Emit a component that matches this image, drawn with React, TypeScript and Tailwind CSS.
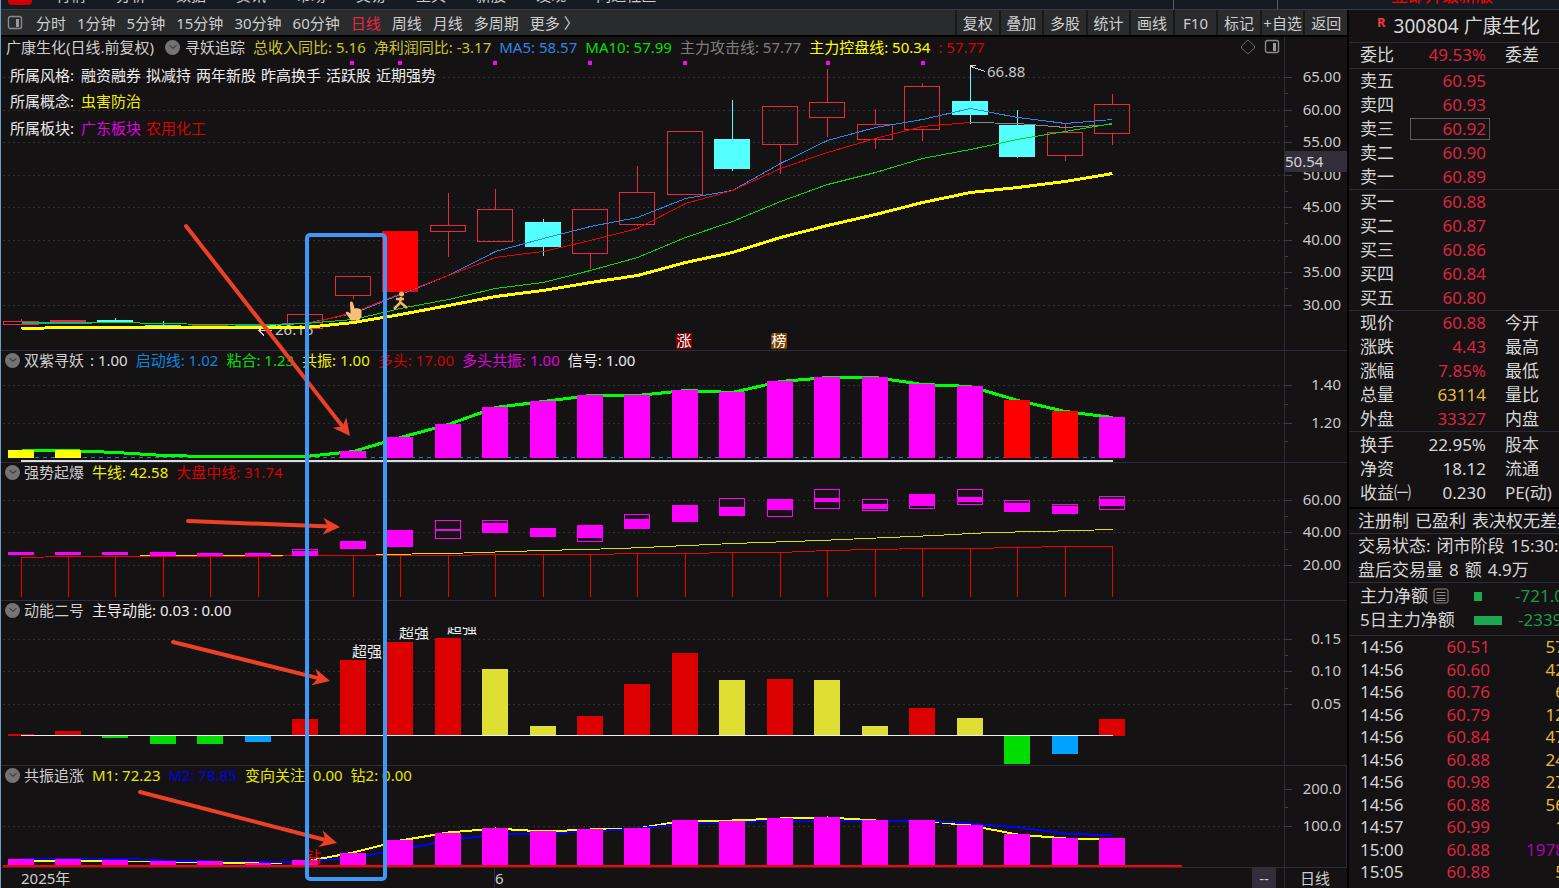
import type { ReactNode } from "react";
import { ChevronDown, Diamond } from "lucide-react";

type Item = { text: string; color: string };
type Tick = { y: number; label?: string };
type Candle = {
  top: number;
  bottom: number;
  high?: number;
  low?: number;
  kind: "up" | "down" | "limit";
};
type Bar = { i: number; top: number; bottom: number; color: string };
type Point = [number, number];

const MAGENTA = "#ff00ff";
const RED = "#dd0000";
const YELLOW = "#dede33";
const GREEN = "#00dd00";
const BLUE = "#00a2ff";

const columnX = (i: number) => Math.floor(21 + 47.46 * i) + 0.5;
const toPoints = (points: Point[]) => points.map(([x, y]) => `${x},${y + 0.5}`).join(" ");

const menuItems = ["行情", "分析", "数据", "资讯", "市场", "交易", "工具", "新股", "发现", "问达社区"];
const periods = ["分时", "1分钟", "5分钟", "15分钟", "30分钟", "60分钟", "日线", "周线", "月线", "多周期", "更多 〉"];
const tools = ["复权", "叠加", "多股", "统计", "画线", "F10", "标记", "+自选", "返回"];
const styles = ["融资融券", "拟减持", "两年新股", "昨高换手", "活跃股", "近期强势"];

const mainLegend: Item[] = [
  { text: "总收入同比: 5.16", color: "text-[#c9c52a]" },
  { text: "净利润同比: -3.17", color: "text-[#c9c52a]" },
  { text: "MA5: 58.57", color: "text-[#2f86e6]" },
  { text: "MA10: 57.99", color: "text-[#00e000]" },
  { text: "主力攻击线: 57.77", color: "text-[#7f7f7f]" },
  { text: "主力控盘线: 50.34", color: "text-[#ffff00]" },
  { text: ": 57.77", color: "text-[#d80000]" },
];

const candles: Candle[] = [
  { top: 321, bottom: 324, high: 319, kind: "up" },
  { top: 320, bottom: 321, kind: "up" },
  { top: 320, bottom: 321, high: 318, kind: "down" },
  { top: 325, bottom: 326, high: 321, kind: "down" },
  { top: 325, bottom: 326, low: 328, kind: "up" },
  { top: 324, bottom: 325, kind: "down" },
  { top: 314, bottom: 328, kind: "up" },
  { top: 276, bottom: 295, low: 299, kind: "up" },
  { top: 231, bottom: 291, kind: "limit" },
  { top: 225, bottom: 231, high: 193, low: 257, kind: "up" },
  { top: 209, bottom: 241, high: 189, kind: "up" },
  { top: 222, bottom: 246, high: 219, low: 256, kind: "down" },
  { top: 209, bottom: 253, low: 269, kind: "up" },
  { top: 192, bottom: 224, high: 166, low: 226, kind: "up" },
  { top: 131, bottom: 194, kind: "up" },
  { top: 139, bottom: 168, high: 100, low: 171, kind: "down" },
  { top: 106, bottom: 144, low: 174, kind: "up" },
  { top: 102, bottom: 117, high: 69, low: 137, kind: "up" },
  { top: 124, bottom: 139, high: 109, low: 149, kind: "up" },
  { top: 86, bottom: 129, high: 83, low: 141, kind: "up" },
  { top: 101, bottom: 114, high: 65, low: 124, kind: "down" },
  { top: 125, bottom: 156, high: 110, low: 158, kind: "down" },
  { top: 132, bottom: 155, high: 123, low: 161, kind: "up" },
  { top: 104, bottom: 133, high: 94, low: 145, kind: "up" },
];

// Series with one value per column, first column given by `from`
const series = (from: number, values: number[]): Point[] => values.map((y, n) => [columnX(from + n), y]);

const ma5 = series(0, [323, 323, 322, 323, 324, 324, 323, 313, 294, 275, 251, 238, 226, 217, 198, 190, 163, 140, 127, 119, 108, 117, 123, 119]);
const ma10 = series(0, [322, 322, 322, 323, 324, 325, 323, 319, 308, 299, 288, 282, 270, 257, 237, 221, 201, 184, 172, 158, 149, 139, 131, 123]);
const attackRed = series(6, [324, 312, 293, 275, 257, 251, 240, 228, 203, 190, 168, 152, 138, 126, 122]);
const attackGray = series(20, [122, 123, 127, 124]);
const control = series(0, [328, 327, 327, 327, 327, 327, 327, 322, 314, 305, 296, 290, 282, 275, 262, 252, 237, 225, 214, 202, 192, 187, 181, 173]);

const resonanceTops = [451, 437, 424, 407, 401, 395, 395, 390, 392, 381, 377, 377, 384, 386, 400, 411, 417];
const resonanceBars: Bar[] = [
  { i: 0, top: 450, bottom: 458, color: "#ffff00" },
  { i: 1, top: 450, bottom: 458, color: "#ffff00" },
  ...resonanceTops.map((top, n) => ({ i: n + 7, top, bottom: 458, color: n === 14 || n === 15 ? "#ff0000" : MAGENTA })),
];
const resonanceLine = series(0, [450, 450, 452, 455, 456, 456, 456, ...resonanceTops]);

// [outer top, outer bottom, filled top, filled bottom]
const burstBoxes = [
  [552, 554, 552, 554], [552, 554, 552, 554], [552, 554, 552, 554], [552, 555, 552, 556],
  [553, 555, 553, 555], [553, 555, 553, 555], [549, 555, 551, 556], [541, 548, 541, 549],
  [530, 546, 530, 547], [520, 538, 529, 531], [520, 532, 523, 533], [528, 536, 528, 537],
  [525, 541, 525, 538], [514, 528, 519, 529], [505, 521, 505, 522], [498, 515, 507, 516],
  [499, 516, 499, 510], [489, 508, 498, 502], [499, 510, 504, 509], [494, 508, 494, 506],
  [489, 504, 497, 502], [500, 511, 503, 512], [504, 513, 506, 513], [496, 509, 499, 506],
];
const bullLine: Point[] = [[376, 554], [448, 553], [543, 550], [620, 548], [733, 543], [820, 540], [865, 538], [935, 535], [990, 532], [1040, 531], [1113, 529]];
const marketLine = series(0, [557, 556, 556, 556, 556, 556, 555, 555, 555, 555, 554, 554, 554, 553, 553, 552, 552, 550, 549, 548, 548, 547, 546, 546]);

const momentum: [number, string][] = [
  [734, RED], [731, RED], [738, GREEN], [744, GREEN], [744, GREEN], [742, BLUE], [719, RED], [660, RED],
  [642, RED], [638, RED], [669, YELLOW], [726, YELLOW], [716, RED], [684, RED], [653, RED], [680, YELLOW],
  [679, RED], [680, YELLOW], [726, YELLOW], [708, RED], [718, YELLOW], [764, GREEN], [754, BLUE], [719, RED],
];
const momentumBars: Bar[] = momentum.map(([y, color], i) => ({ i, top: Math.min(y, 736), bottom: Math.max(y, 736), color }));

const chaseTops = [859, 859, 860, 861, 861, 863, 860, 853, 840, 833, 828, 831, 829, 828, 820, 821, 818, 817, 820, 820, 825, 834, 838, 838];
const chaseBars: Bar[] = chaseTops.map((top, i) => ({ i, top, bottom: 866, color: MAGENTA }));
const m1 = series(0, [860, 860, 861, 861, 862, 863, 861, 852, 840, 832, 828, 831, 829, 828, 820, 820, 818, 817, 820, 820, 825, 834, 838, 838]);
const m2 = series(0, [858, 858, 858, 860, 861, 861, 861, 857, 849, 840, 834, 833, 831, 828, 823, 822, 820, 820, 820, 820, 823, 827, 833, 835]);

const sells = [["卖五", "60.95"], ["卖四", "60.93"], ["卖三", "60.92"], ["卖二", "60.90"], ["卖一", "60.89"]];
const buys = [["买一", "60.88"], ["买二", "60.87"], ["买三", "60.86"], ["买四", "60.84"], ["买五", "60.80"]];
const quotes = [
  ["现价", "60.88", "今开"],
  ["涨跌", "4.43", "最高"],
  ["涨幅", "7.85%", "最低"],
  ["总量", "63114", "量比"],
  ["外盘", "33327", "内盘"],
];
const basics = [["换手", "22.95%", "股本"], ["净资", "18.12", "流通"], ["收益㈠", "0.230", "PE(动)"]];
const notes = [["注册制", "已盈利", "表决权无差异"], ["交易状态:", "闭市阶段", "15:30:00"], ["盘后交易量", "8", "额", "4.9万"]];
const trades = [
  ["14:56", "60.51", "57"], ["14:56", "60.60", "42"], ["14:56", "60.76", "6"], ["14:56", "60.79", "12"],
  ["14:56", "60.84", "47"], ["14:56", "60.88", "24"], ["14:56", "60.98", "27"], ["14:56", "60.88", "56"],
  ["14:57", "60.99", "1"], ["15:00", "60.88", "1978"], ["15:05", "60.88", "5"], ["15:21", "60.88", "2"],
];

function PanelIcon() {
  return (
    <svg className="size-4 shrink-0" viewBox="0 0 16 16" fill="none" aria-hidden="true">
      <rect x="1.5" y="1.5" width="13" height="12" rx="2" stroke="#8a8a8a" strokeWidth="1.4" />
      <rect x="9" y="4" width="3" height="8" fill="#9a9a9a" />
    </svg>
  );
}

function Toggle({ name }: { name: string }) {
  return (
    <button
      type="button"
      aria-label={`切换 ${name}`}
      className="flex size-[15px] shrink-0 items-center justify-center rounded-full bg-[#747474] text-[#1c1c1c]"
    >
      <ChevronDown className="size-3" />
    </button>
  );
}

function Legend({ name, items }: { name: string; items: Item[] }) {
  return (
    <div className="relative flex h-[18px] items-center gap-2 pl-1">
      <Toggle name={name} />
      <span className="-ml-1">{name}</span>
      {items.map((item) => (
        <span key={item.text} className={item.color}>{item.text}</span>
      ))}
    </div>
  );
}

function Bars({ bars }: { bars: Bar[] }) {
  return (
    <>
      {bars.map((bar) => (
        <rect key={bar.i} x={columnX(bar.i) - 13.5} y={bar.top} width={26} height={bar.bottom - bar.top} fill={bar.color} />
      ))}
    </>
  );
}

function Line({ points, color, width = 1 }: { points: Point[]; color: string; width?: number }) {
  return <polyline points={toPoints(points)} fill="none" stroke={color} strokeWidth={width} />;
}

type PanelProps = {
  top: number;
  className: string;
  ticks: Tick[];
  grid: number[];
  header: ReactNode;
  marker?: ReactNode;
  axisClassName?: string;
  children: ReactNode;
};

// Shapes use window coordinates; `top` is where the panel's content starts
function Panel({ top, className, ticks, grid, header, marker, axisClassName = "", children }: PanelProps) {
  return (
    <section className={`flex shrink-0 ${className}`}>
      <div className="relative min-w-0 flex-1 overflow-hidden">
        <svg className="absolute inset-0 size-full" shapeRendering="crispEdges">
          {grid.map((y) => (
            <line key={y} x1="2" x2="100%" y1={y - top + 0.5} y2={y - top + 0.5} stroke="#303033" strokeDasharray="2 3" />
          ))}
          <g transform={`translate(-1 ${-top})`}>{children}</g>
        </svg>
        {header}
      </div>
      <div className={`relative w-[63px] shrink-0 border-l border-[#2b2e3a] ${axisClassName}`}>
        <svg className="absolute inset-0 size-full">
          {ticks.map((tick) => (
            <g key={tick.y}>
              <line x1="0" x2={tick.label ? 7 : 3} y1={tick.y - top + 0.5} y2={tick.y - top + 0.5} stroke="#3a3d49" />
              {tick.label ? (
                <text x="56" y={tick.y - top + 5} textAnchor="end" fontSize="15" fill="#c8c8c8">{tick.label}</text>
              ) : null}
            </g>
          ))}
        </svg>
        {marker}
      </div>
    </section>
  );
}

function CandleMark({ candle, i }: { candle: Candle; i: number }) {
  const x = columnX(i);
  const color = candle.kind === "down" ? "#54ffff" : candle.kind === "up" ? "#e8293f" : "#ff0000";
  return (
    <g stroke={color}>
      {candle.high ? <line x1={x} x2={x} y1={candle.high} y2={candle.top} /> : null}
      {candle.low ? <line x1={x} x2={x} y1={candle.bottom} y2={candle.low} /> : null}
      <rect
        x={x - 18}
        y={candle.top + 0.5}
        width={35}
        height={candle.bottom - candle.top}
        fill={candle.kind === "up" ? "none" : color}
      />
    </g>
  );
}

function MainPanel() {
  const prices = [65, 60, 55, 50, 45, 40, 35, 30];
  const ys = [77, 110, 142, 175, 207, 240, 272, 305];
  const ticks = ys.flatMap((y, n) => [
    { y, label: `${prices[n]}.00` },
    ...(n < 7 ? [{ y: y + 16 }] : []),
  ]);
  return (
    <Panel
      top={37}
      className="h-[313px]"
      grid={ys}
      ticks={ticks}
      marker={
        <div className="absolute inset-x-0 top-[114px] h-[21px] bg-[#322f3b] leading-[20px] text-[#d4d4d4]">50.54</div>
      }
      header={
        <div className="relative">
          <div className="flex h-5 items-center gap-2 pr-1 pl-[5px]">
            <h1 className="mr-[3px]">广康生化(日线.前复权)</h1>
            <Toggle name="寻妖追踪" />
            <span className="-ml-[3px]">寻妖追踪</span>
            {mainLegend.map((item) => (
              <span key={item.text} className={item.color}>{item.text}</span>
            ))}
            <button type="button" aria-label="标记" className="ml-auto text-[#6b6b6b]">
              <Diamond className="size-4" strokeWidth={1.5} />
            </button>
            <button type="button" aria-label="侧栏"><PanelIcon /></button>
          </div>
          <div className="pt-1 pl-[9px] text-[#ececec]">
            <p className="flex h-[27px] items-center gap-[5px]">
              <span className="w-[66px]">所属风格:</span>
              {styles.map((style) => (
                <span key={style}>{style}</span>
              ))}
            </p>
            <p className="flex h-[26px] items-center gap-[5px]">
              <span className="w-[66px]">所属概念:</span>
              <span className="text-[#f0f000]">虫害防治</span>
            </p>
            <p className="flex h-[28px] items-center gap-[5px]">
              <span className="w-[66px]">所属板块:</span>
              <span className="text-[#e000e0]">广东板块</span>
              <span className="text-[#d80000]">农用化工</span>
            </p>
          </div>
        </div>
      }
    >
      {[351, 399, 494, 589, 684, 827, 922].map((x) => (
        <rect key={x} x={x - 1} y="61" width="4" height="4" fill={MAGENTA} />
      ))}
      {candles.map((candle, i) => (
        <CandleMark key={i} candle={candle} i={i} />
      ))}
      <Line points={ma5} color="#2f86e6" />
      <Line points={attackRed} color="#ee0000" />
      <Line points={attackGray} color="#8a8a8a" />
      <Line points={ma10} color="#00dd00" />
      <text x="275" y="335" fontSize="15" fill="#c8c8c8">26.16</text>
      <path d="M272 330.5h-13M263 326.5l-4 4 5 5" fill="none" stroke="#d4d4d4" />
      <Line points={control} color="#ffff00" width={3} />
      <path d="M985 71.5l-14-5M976 65.5h-5.500v5" fill="none" stroke="#d4d4d4" />
      <text x="987" y="77" fontSize="15" fill="#c8c8c8">66.88</text>
      <g shapeRendering="auto">
        <path d="M350 302.500c1-1.500 2.500-1 3 .5l1.500 5.500c4-1 6.500 0 7 3v5l-2.500 4h-8l-5-7c-.5-1.500.5-2 2-1.500l2.500 1.500z" fill="#f7bf77" />
        <circle cx="401.500" cy="294" r="2.500" fill="#f2b866" />
        <path d="M396 299h8M401 297l-1 6-6 6M400 302l7 6" fill="none" stroke="#f2b866" strokeWidth="2.500" />
      </g>
      <rect x="676" y="333" width="16" height="16" rx="2" fill="#800000" />
      <text x="684" y="346" textAnchor="middle" fontSize="15" fill="#ffffff">涨</text>
      <rect x="771" y="333" width="16" height="16" rx="2" fill="#7d4200" />
      <text x="779" y="346" textAnchor="middle" fontSize="15" fill="#ffffff">榜</text>
    </Panel>
  );
}

function ResonancePanel() {
  return (
    <Panel
      top={351}
      className="h-28 border-t border-[#2b2e3a]"
      grid={[385, 423]}
      ticks={[{ y: 385, label: "1.40" }, { y: 404 }, { y: 423, label: "1.20" }, { y: 441 }]}
      header={
        <Legend
          name="双紫寻妖"
          items={[
            { text: ": 1.00", color: "-ml-0.5 text-[#dcdcdc]" },
            { text: "启动线: 1.02", color: "text-[#0c86e0]" },
            { text: "粘合: 1.23", color: "text-[#00e000]" },
            { text: "共振: 1.00", color: "text-[#f0f000]" },
            { text: "多头: 17.00", color: "text-[#d80000]" },
            { text: "多头共振: 1.00", color: "text-[#e000e0]" },
            { text: "信号: 1.00", color: "text-[#ececec]" },
          ]}
        />
      }
    >
      <line x1="35" x2="1113" y1="457.5" y2="457.5" stroke="#0a88dc" strokeDasharray="4 4" />
      <Line points={resonanceLine} color="#00ff00" width={3} />
      <Bars bars={resonanceBars} />
      <rect x="21" y="460" width="1092" height="2" fill="#dcdcdc" />
    </Panel>
  );
}

function BurstPanel() {
  return (
    <Panel
      top={463}
      className="h-[138px] border-t border-[#2b2e3a]"
      grid={[500, 532, 565]}
      ticks={[{ y: 500, label: "60.00" }, { y: 516 }, { y: 532, label: "40.00" }, { y: 549 }, { y: 565, label: "20.00" }]}
      header={
        <Legend
          name="强势起爆"
          items={[
            { text: "牛线: 42.58", color: "text-[#f0f000]" },
            { text: "大盘中线: 31.74", color: "text-[#d80000]" },
          ]}
        />
      }
    >
      <Line points={marketLine} color="#ee0000" />
      {marketLine.map(([x, y]) => (
        <line key={x} x1={x} x2={x} y1={y} y2="597" stroke="#ee0000" />
      ))}
      <Line points={[[140, 555], [283, 555]]} color="#f0e000" />
      <Line points={bullLine} color="#e0e000" />
      {burstBoxes.map(([top, bottom, fillTop, fillBottom], i) => (
        <g key={i}>
          <rect x={columnX(i) - 13} y={top + 0.5} width={25} height={bottom - top} fill="#141213" stroke={MAGENTA} />
          <rect x={columnX(i) - 13.5} y={fillTop} width={26} height={fillBottom - fillTop} fill={MAGENTA} />
        </g>
      ))}
    </Panel>
  );
}

function MomentumPanel() {
  return (
    <Panel
      top={601}
      className="h-[165px] border-t border-[#2b2e3a]"
      grid={[639, 671, 704]}
      ticks={[{ y: 639, label: "0.15" }, { y: 655 }, { y: 671, label: "0.10" }, { y: 688 }, { y: 704, label: "0.05" }]}
      header={<Legend name="动能二号" items={[{ text: "主导动能: 0.03 : 0.00", color: "text-[#ececec]" }]} />}
    >
      <clipPath id="strong-clip">
        <rect x="0" y="627" width="1300" height="138" />
      </clipPath>
      <Bars bars={momentumBars} />
      <line x1="21" x2="1113" y1="735.5" y2="735.5" stroke="#f0f0f0" />
      <g fontSize="15" fill="#ececec" clipPath="url(#strong-clip)">
        <text x="352" y="657">超强</text>
        <text x="399" y="638">超强</text>
        <text x="447" y="633">超强</text>
      </g>
    </Panel>
  );
}

function ChasePanel() {
  return (
    <Panel
      top={766}
      className="h-[103px] border-y border-[#2b2e3a]"
      axisClassName="border-r"
      grid={[826]}
      ticks={[{ y: 789, label: "200.0" }, { y: 807 }, { y: 826, label: "100.0" }]}
      header={
        <Legend
          name="共振追涨"
          items={[
            { text: "M1: 72.23", color: "text-[#e6e600]" },
            { text: "M2: 78.85", color: "text-[#0000e6]" },
            { text: "变向关注: 0.00", color: "text-[#e6e600]" },
            { text: "钻2: 0.00", color: "text-[#e6e600]" },
          ]}
        />
      }
    >
      <Line points={m1} color="#ffff00" width={2} />
      <Line points={m2} color="#0000ff" width={2} />
      <Bars bars={chaseBars} />
      <text x="306" y="862" fontSize="15" fill="#ff0000">钻</text>
      <rect x="3" y="865" width="1179" height="2" fill="#ff0000" />
    </Panel>
  );
}

function Arrow({ from, to }: { from: Point; to: Point }) {
  const angle = (Math.atan2(to[1] - from[1], to[0] - from[0]) * 180) / Math.PI;
  const length = Math.hypot(to[0] - from[0], to[1] - from[1]);
  return (
    <g transform={`translate(${to[0]} ${to[1]}) rotate(${angle})`}>
      <line x1={-length} x2={-10} y1="0" y2="0" stroke="#ee4026" strokeWidth="4" strokeLinecap="round" />
      <path d="M0 0L-17-8.500L-12 0L-17 8.500Z" fill="#ee4026" />
    </g>
  );
}

function Annotations() {
  return (
    <svg className="pointer-events-none absolute inset-0 size-full">
      <g transform="translate(-1 0)">
        <Arrow from={[186, 226]} to={[350, 436]} />
        <Arrow from={[188, 521]} to={[340, 527]} />
        <Arrow from={[173, 642]} to={[330, 681]} />
        <Arrow from={[140, 792]} to={[337, 843]} />
        <rect x="307" y="235" width="78" height="644" rx="3" fill="none" stroke="#3f98f6" strokeWidth="4" />
      </g>
    </svg>
  );
}

function QuoteTable({ rows, red }: { rows: string[][]; red?: boolean }) {
  return (
    <table className="w-full table-fixed whitespace-nowrap">
      <colgroup>
        <col className="w-[61px]" />
        <col className="w-20" />
        <col />
      </colgroup>
      <tbody>
        {rows.map(([label, value, next]) => (
          <tr key={label} className="h-6">
            <th scope="row" className="p-0 pl-[11px] text-left font-normal">{label}</th>
            <td className={`p-0 text-right ${label === "总量" ? "text-[#e9b83a]" : red ? "text-[#dc2440]" : ""}`}>
              <span className={`block border pr-[3px] leading-[20px] ${label === "卖三" ? "border-[#5c5c5c]" : "border-transparent"}`}>
                {value}
              </span>
            </td>
            <td className="p-0 pl-[15px]">{next}</td>
          </tr>
        ))}
      </tbody>
    </table>
  );
}

function Note({ words }: { words: string[] }) {
  return (
    <p className="flex gap-1.5 pl-[9px]">
      {words.map((word) => (
        <span key={word} className="shrink-0">{word}</span>
      ))}
    </p>
  );
}

function Sidebar() {
  return (
    <aside className="ml-0.5 w-[210px] shrink-0 overflow-hidden bg-[#141213] text-[17px] leading-6 whitespace-nowrap text-[#d6d6d6]">
      <h2 className="flex h-8 items-center pl-7 text-[19px]">
        <span className="mr-2 self-start text-[13px] leading-6 font-bold text-[#f03a3a]">R</span>
        300804 广康生化
      </h2>
      <div className="border-t border-[#2b2e3a] pb-px">
        <QuoteTable rows={[["委比", "49.53%", "委差"]]} red />
      </div>
      <div className="border-t border-[#2b2e3a]">
        <QuoteTable rows={sells} red />
      </div>
      <div className="border-t border-[#2b2e3a]">
        <QuoteTable rows={buys} red />
      </div>
      <div className="border-t border-[#2b2e3a]">
        <QuoteTable rows={quotes} red />
      </div>
      <div className="border-t border-[#2b2e3a] pt-px pb-0.5">
        <QuoteTable rows={basics} />
      </div>
      <div className="border-t-2 border-black">
        <Note words={notes[0]} />
      </div>
      <div className="border-t border-[#2b2e3a]">
        <Note words={notes[1]} />
        <Note words={notes[2]} />
      </div>
      <div className="border-t border-[#2b2e3a] pt-px pb-[3px] pl-[11px] text-[#1b9a48]">
        <div className="flex h-6 items-center">
          <span className="shrink-0 text-[#d6d6d6]">主力净额</span>
          <svg className="ml-[5px] size-4 shrink-0" viewBox="0 0 16 16" fill="none" stroke="#8a8a8a" aria-hidden="true">
            <rect x="1" y="1" width="14" height="14" rx="2" />
            <path d="M3.500 4.500h9M3.500 7.500h9M3.500 10.500h9M3.500 12.500h9" />
          </svg>
          <span className="ml-[25px] h-[9px] w-2 shrink-0 bg-[#1ba94f]" />
          <span className="ml-[33px] shrink-0">-721.0</span>
        </div>
        <div className="flex h-6 items-center">
          <span className="w-[114px] shrink-0 text-[#d6d6d6]">5日主力净额</span>
          <span className="h-[9px] w-7 shrink-0 bg-[#1ba94f]" />
          <span className="ml-4 shrink-0">-2339</span>
        </div>
      </div>
      <table className="h-[271px] w-[216px] table-fixed border-t border-[#2b2e3a] leading-[22px]">
        <tbody>
          {trades.map(([time, price, volume], i) => (
            <tr key={i}>
              <td className="w-[71px] p-0 pl-[11px]">{time}</td>
              <td className="w-[70px] p-0 text-right text-[#dc2440]">{price}</td>
              <td className={`p-0 text-right ${volume === "1978" ? "text-[#b000b0]" : "text-[#e9b83a]"}`}>{volume}</td>
            </tr>
          ))}
        </tbody>
      </table>
    </aside>
  );
}

export default function App() {
  return (
    <div className="flex h-screen flex-col overflow-hidden bg-black font-['Noto_Sans','Noto_Sans_CJK_SC',sans-serif] text-[15px] leading-5 whitespace-nowrap text-[#cfcfcf]">
      <div className="relative flex min-h-0 flex-1">
        <main className="relative flex min-w-0 flex-1 flex-col overflow-hidden border-l border-[#6b9fc9] bg-[#141213]">
          <header className="flex h-[10px] shrink-0 items-end overflow-hidden border-b border-[#333d47] bg-[#161b22] pl-[7px]">
            <div className="mb-1 h-[5px] w-6 rounded-b-[4px] bg-[#d00000]" />
            <nav className="mb-[5px] ml-6 flex gap-[30px] leading-[17px]">
              {menuItems.map((item) => (
                <a key={item} href="#">{item}</a>
              ))}
            </nav>
            <div className="ml-auto h-full w-[105px] border-x border-[#5a5f66]" />
            <div className="w-[69px]" />
          </header>
          <div className="flex h-[27px] shrink-0 items-stretch border-b-2 border-black bg-[#292b2c]">
            <div className="flex items-center gap-[11px] pl-[6px]">
              <PanelIcon />
              <div className="ml-0.5 flex items-center gap-[11px]">
                {periods.map((period) => (
                  <button key={period} type="button" className={period === "日线" ? "text-[#e8293f]" : ""}>
                    {period}
                  </button>
                ))}
              </div>
            </div>
            <div className="ml-auto grid w-[392px] grid-cols-9">
              {tools.map((tool) => (
                <button key={tool} type="button" className="flex items-center justify-center border-l-2 border-[#181818]">
                  {tool}
                </button>
              ))}
            </div>
          </div>
          <MainPanel />
          <ResonancePanel />
          <BurstPanel />
          <MomentumPanel />
          <ChasePanel />
          <footer className="flex h-5 shrink-0 items-center">
            <span className="w-[493px] pl-5">2025年</span>
            <span className="border-l border-[#2b2e3a]">6</span>
            <span className="mr-2 ml-auto w-6 bg-[#322f3b] text-center">--</span>
            <span className="w-[63px] border-l border-[#2b2e3a] pl-[15px]">日线</span>
          </footer>
          <Annotations />
        </main>
        <div className="flex flex-col">
          <div className="flex h-[10px] shrink-0 items-end overflow-hidden border-b border-[#333d47] bg-[#161b22] pl-11 text-[17px] leading-[17px] text-[#ff0000]">
            <span className="mb-[5px]">立即升级新版</span>
          </div>
          <Sidebar />
        </div>
      </div>
    </div>
  );
}
